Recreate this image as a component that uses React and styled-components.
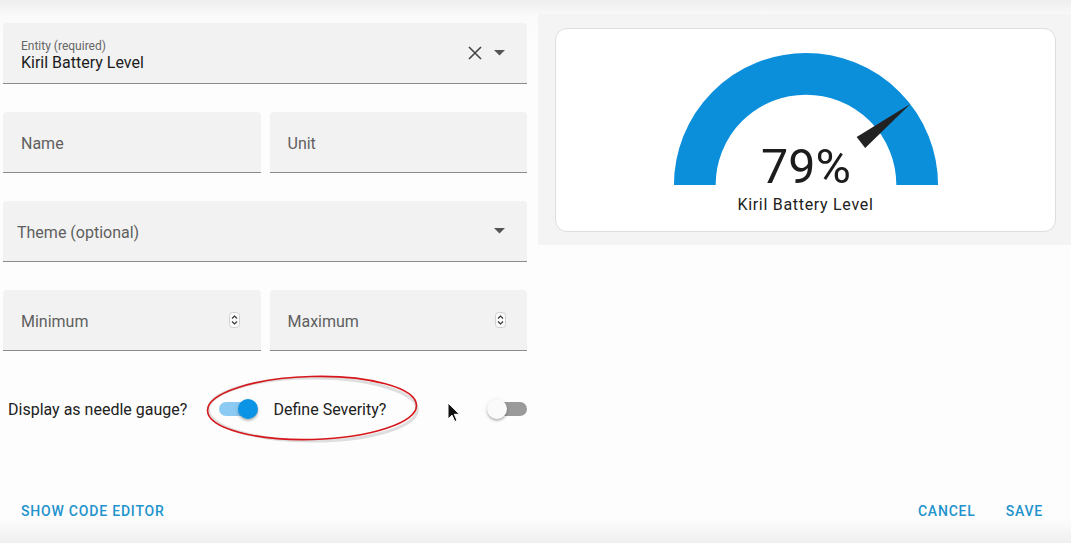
import React from "react";
import styled, { createGlobalStyle } from "styled-components";

const Global = createGlobalStyle`
  html, body { margin: 0; padding: 0; }
  body { font-family: Roboto, "Liberation Sans", sans-serif; color: #212121; }
`;

const Dialog = styled.div`
  width: 1071px;
  height: 543px;
  display: flex;
  flex-direction: column;
  background: linear-gradient(to bottom, #eeeeee 0px, #fafafa 16px, #fdfdfd 40px, #fdfdfd 518px, #efefef 543px);
  overflow: hidden;
`;

const Content = styled.div`
  flex: 1;
  display: flex;
  gap: 11px;
  padding-top: 14px;
`;

const EditorCol = styled.div`
  width: 524px;
  margin-left: 3px;
  padding-top: 9px;
  display: flex;
  flex-direction: column;
  gap: 28px;
`;

const Row = styled.div`
  display: grid;
  grid-template-columns: 1fr 1fr;
  gap: 9px;
`;

const Field = styled.div`
  height: 60px;
  background: #f2f2f2;
  border-radius: 4px 4px 0 0;
  border-bottom: 1px solid #8b8b8b;
  display: flex;
  align-items: center;
  padding: 0 ${(p) => p.$pr || 16}px 0 ${(p) => p.$pl || 18}px;
  box-sizing: content-box;
`;

const FieldText = styled.div`
  flex: 1;
  display: flex;
  flex-direction: column;
  padding-top: 3px;
`;

const SmallLabel = styled.span`
  font-size: 12px;
  color: #666;
  line-height: 14px;
  margin-top: 2px;
`;

const Value = styled.span`
  font-size: 16px;
  color: #1c1c1c;
  line-height: 20px;
`;

const Label = styled.span`
  font-size: 16px;
  color: #5f5f5f;
  line-height: 20px;
`;

const IconBox = styled.div`
  display: flex;
  align-items: center;
  gap: 11px;
`;

const Toggles = styled.div`
  position: relative;
  display: grid;
  grid-template-columns: 1fr 1fr;
  gap: 9px;
  height: 40px;
  margin-top: 10px;
`;

const ToggleCell = styled.div`
  display: flex;
  align-items: center;
  justify-content: space-between;
  padding-left: ${(p) => p.$pl}px;
  padding-right: ${(p) => p.$pr}px;
  font-size: 16px;
  color: #212121;
`;

const Switch = styled.div`
  position: relative;
  width: 37px;
  height: 14px;
  border-radius: 7px;
  background: ${(p) => (p.$on ? "#8ccaf3" : "#9a9a9a")};
  margin-right: ${(p) => (p.$on ? 2 : 0)}px;
`;

const Knob = styled.div`
  position: absolute;
  top: -3px;
  ${(p) => (p.$on ? "right: -2px;" : "left: -3px;")}
  width: 20px;
  height: 20px;
  border-radius: 50%;
  background: ${(p) => (p.$on ? "#0b93e5" : "#fafafa")};
  box-shadow: 0 2px 2px rgba(0,0,0,0.2), 0 1px 4px rgba(0,0,0,0.12);
`;

const Annot = styled.svg`
  position: absolute;
  left: 203px;
  top: -14px;
  overflow: visible;
`;

const Cursor = styled.svg`
  position: absolute;
  left: 444px;
  top: 13px;
`;

const Preview = styled.div`
  flex: 1;
  align-self: flex-start;
  background: #f4f4f4;
  padding: 14px 15px 13px 17px;
`;

const Card = styled.div`
  background: #ffffff;
  border: 1px solid #dedede;
  border-radius: 12px;
  display: flex;
  flex-direction: column;
  align-items: center;
  padding-top: 17px;
  box-sizing: border-box;
  height: 204px;
`;

const GaugeSvg = styled.svg`
  overflow: visible;
`;

const GaugeName = styled.div`
  font-size: 16px;
  color: #212121;
  margin-top: 10px;
  letter-spacing: 0.7px;
`;

const Footer = styled.div`
  display: flex;
  align-items: center;
  padding: 0 20px 14px 13px;
`;

const Spacer = styled.div`
  flex: 1;
`;

const TextButton = styled.button`
  height: 36px;
  padding: 0 8px;
  border: none;
  background: none;
  font-family: Roboto, "Liberation Sans", sans-serif;
  font-size: 14px;
  font-weight: 500;
  letter-spacing: 0.8px;
  color: #1f93cc;
  text-transform: uppercase;
  margin-left: ${(p) => p.$ml || 0}px;
  cursor: pointer;
`;

const ClearIcon = () => (
  <svg width="16" height="16" viewBox="0 0 16 16">
    <path d="M2 2 L14 14 M14 2 L2 14" stroke="#444" strokeWidth="1.6" fill="none" />
  </svg>
);

const DropIcon = () => (
  <svg width="11" height="6" viewBox="0 0 11 6">
    <path d="M0 0 L11 0 L5.5 5.5 Z" fill="#555" />
  </svg>
);

const SpinIcon = () => (
  <svg width="11" height="16" viewBox="0 0 11 16">
    <rect x="0.5" y="0.5" width="10" height="15" rx="3" fill="#fafafa" stroke="#d0d0d0" />
    <path d="M3 6.5 L5.5 4 L8 6.5 M3 9.5 L5.5 12 L8 9.5" stroke="#333" strokeWidth="1.1" fill="none" />
  </svg>
);

const Gauge = ({ value }) => {
  const angle = (value / 100) * 180;
  return (
    <GaugeSvg width="278" height="139" viewBox="-50 -50 100 50">
      <path d="M -40 0 A 40 40 0 0 1 40 0" stroke="#0b8fdb" strokeWidth="15" fill="none" />
      <path d="M -25 -2.5 L -47.5 0 L -25 2.5 z" fill="#222" transform={`rotate(${angle})`} />
      <text x="0" y="-0.7" textAnchor="middle" fontSize="17.4" fontFamily="Roboto, sans-serif" fill="#1c1c1c">
        {value}%
      </text>
    </GaugeSvg>
  );
};

export default function App() {
  return (
    <Dialog>
      <Global />
      <Content>
        <EditorCol>
          <Field $pl={18} $pr={22}>
            <FieldText>
              <SmallLabel>Entity (required)</SmallLabel>
              <Value>Kiril Battery Level</Value>
            </FieldText>
            <IconBox>
              <ClearIcon />
              <DropIcon />
            </IconBox>
          </Field>
          <Row>
            <Field>
              <FieldText>
                <Label>Name</Label>
              </FieldText>
            </Field>
            <Field>
              <FieldText>
                <Label>Unit</Label>
              </FieldText>
            </Field>
          </Row>
          <Field $pl={14} $pr={22}>
            <FieldText>
              <Label>Theme (optional)</Label>
            </FieldText>
            <DropIcon />
          </Field>
          <Row>
            <Field $pr={21}>
              <FieldText>
                <Label>Minimum</Label>
              </FieldText>
              <SpinIcon />
            </Field>
            <Field $pr={21}>
              <FieldText>
                <Label>Maximum</Label>
              </FieldText>
              <SpinIcon />
            </Field>
          </Row>
          <Toggles>
            <ToggleCell $pl={5} $pr={3}>
              <span>Display as needle gauge?</span>
              <Switch $on>
                <Knob $on />
              </Switch>
            </ToggleCell>
            <ToggleCell $pl={4} $pr={0}>
              <span>Define Severity?</span>
              <Switch>
                <Knob />
              </Switch>
            </ToggleCell>
            <Annot width="212" height="66" viewBox="0 0 212 66">
              <ellipse cx="106" cy="33" rx="104.5" ry="31.5" fill="none" stroke="rgba(0,0,0,0.12)" strokeWidth="3" transform="translate(0.8 1.5)" />
              <ellipse cx="106" cy="33" rx="104.5" ry="31.5" fill="none" stroke="#d6161b" strokeWidth="1.6" transform="rotate(-1.5 106 33)" />
            </Annot>
            <Cursor width="14" height="22" viewBox="0 0 14 22">
              <path d="M1 1 L1 17 L5 13.2 L7.8 19.5 L10 18.5 L7.3 12.3 L12.5 12.3 Z" fill="#111" stroke="#fff" strokeWidth="1" />
            </Cursor>
          </Toggles>
        </EditorCol>
        <Preview>
          <Card>
            <Gauge value={79} />
            <GaugeName>Kiril Battery Level</GaugeName>
          </Card>
        </Preview>
      </Content>
      <Footer>
        <TextButton>Show code editor</TextButton>
        <Spacer />
        <TextButton>Cancel</TextButton>
        <TextButton $ml={14}>Save</TextButton>
      </Footer>
    </Dialog>
  );
}
